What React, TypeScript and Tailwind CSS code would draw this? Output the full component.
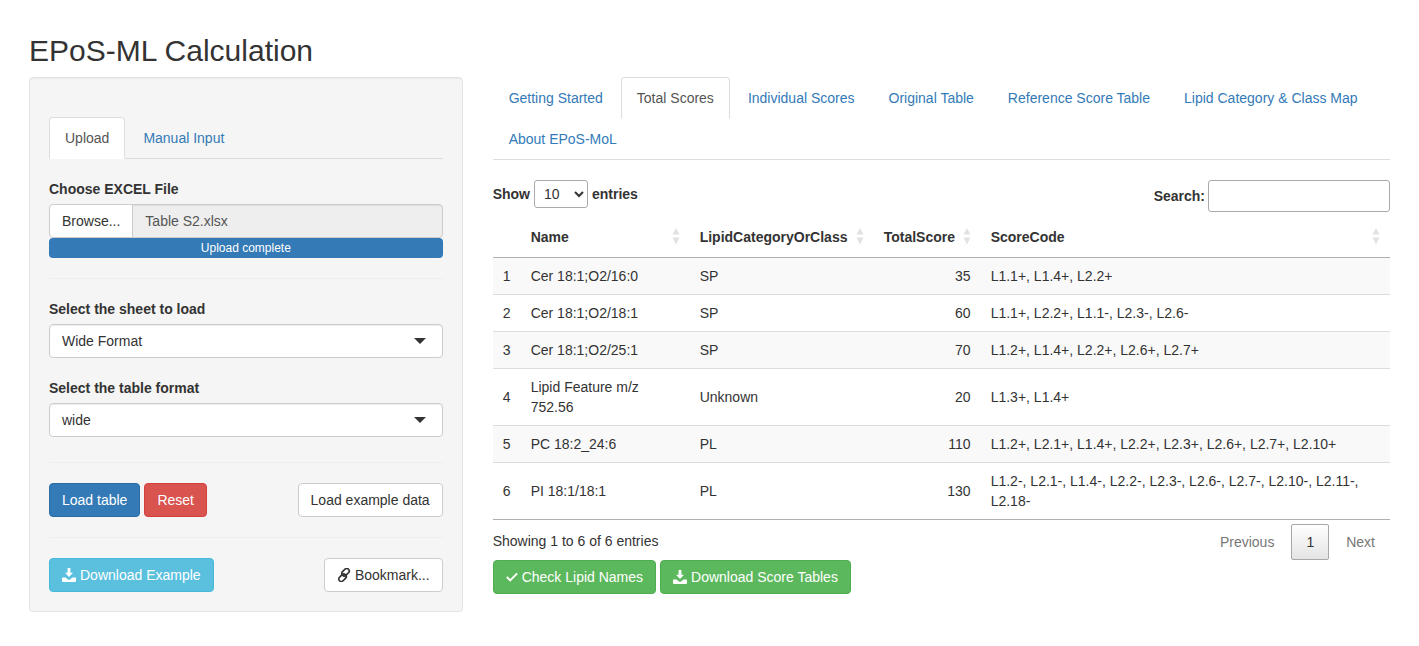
import React from 'react';

const rows = [
  { id: 1, name: 'Cer 18:1;O2/16:0', category: 'SP', score: 35, code: 'L1.1+, L1.4+, L2.2+' },
  { id: 2, name: 'Cer 18:1;O2/18:1', category: 'SP', score: 60, code: 'L1.1+, L2.2+, L1.1-, L2.3-, L2.6-' },
  { id: 3, name: 'Cer 18:1;O2/25:1', category: 'SP', score: 70, code: 'L1.2+, L1.4+, L2.2+, L2.6+, L2.7+' },
  { id: 4, name: 'Lipid Feature m/z 752.56', category: 'Unknown', score: 20, code: 'L1.3+, L1.4+' },
  { id: 5, name: 'PC 18:2_24:6', category: 'PL', score: 110, code: 'L1.2+, L2.1+, L1.4+, L2.2+, L2.3+, L2.6+, L2.7+, L2.10+' },
  { id: 6, name: 'PI 18:1/18:1', category: 'PL', score: 130, code: 'L1.2-, L2.1-, L1.4-, L2.2-, L2.3-, L2.6-, L2.7-, L2.10-, L2.11-, L2.18-' },
];

const SortIcon = () => (
  <svg width="8" height="17" viewBox="0 0 8 17" className="shrink-0">
    <path d="M4 0 L7.5 6.5 L0.5 6.5 Z" fill="#e2e2e2" />
    <path d="M4 16.5 L7.5 9.5 L0.5 9.5 Z" fill="#e2e2e2" />
  </svg>
);

const DownloadIcon = () => (
  <svg width="14" height="14" viewBox="0 0 14 14" className="shrink-0" fill="currentColor">
    <path d="M5.6 0 H8.4 V4.8 H11 L7 9 L3 4.8 H5.6 Z" />
    <path d="M0 9.5 H3.6 L6 11.5 Q7 12.2 8 11.5 L10.4 9.5 H14 V13 Q14 14 13 14 H1 Q0 14 0 13 Z" />
  </svg>
);

const LinkIcon = () => (
  <svg width="14" height="14" viewBox="0 0 14 14" className="shrink-0" fill="none" stroke="currentColor" strokeWidth="1.7">
    <rect x="6" y="0" width="5" height="8.4" rx="2.5" transform="rotate(45 8.5 4.2)" />
    <rect x="3" y="5.6" width="5" height="8.4" rx="2.5" transform="rotate(45 5.5 9.8)" />
  </svg>
);

const CheckIcon = () => (
  <svg width="12" height="10" viewBox="0 0 12 10" className="shrink-0" fill="none" stroke="currentColor" strokeWidth="1.9">
    <path d="M0.8 5 L4.2 8.4 L11.2 1.4" />
  </svg>
);

const Select = ({ value }: { value: string }) => (
  <div className="flex h-[34px] items-center justify-between rounded-[4px] border border-[#cccccc] bg-white pl-3 pr-4 shadow-[inset_0_1px_1px_rgba(0,0,0,0.075)]">
    <span>{value}</span>
    <svg width="12" height="6" viewBox="0 0 12 6">
      <path d="M0 0 L12 0 L6 6 Z" fill="#333333" />
    </svg>
  </div>
);

const btn = 'flex h-[34px] items-center rounded-[4px] border px-3';
const hr = 'border-0 border-t border-[#eeeeee]';

export default function App() {
  return (
    <div className="pb-[34px] pl-[29px] pr-[29px] pt-[34px] font-['Liberation_Sans',Arial,sans-serif] text-[14px] leading-[20px] text-[#333333]">
      <h2 className="mb-[10px] text-[30px] leading-[33px]">EPoS-ML Calculation</h2>

      <div className="flex gap-[30px]">
        {/* sidebar */}
        <div className="w-[433.67px] shrink-0 self-start rounded-[4px] border border-[#e3e3e3] bg-[#f5f5f5] px-[19px] pb-[19px] pt-[39px] shadow-[inset_0_1px_1px_rgba(0,0,0,0.05)]">
          <div className="flex border-b border-[#dddddd]">
            <div className="-mb-px mr-[2px] rounded-t-[4px] border border-[#dddddd] border-b-white bg-white px-[15px] py-[10px] text-[#555555]">Upload</div>
            <div className="-mb-px border border-transparent px-[15px] py-[10px] text-[#337ab7]">Manual Input</div>
          </div>

          <div className="mb-[5px] mt-[20px] font-bold">Choose EXCEL File</div>
          <div className="flex h-[34px]">
            <div className="flex items-center rounded-l-[4px] border border-[#cccccc] bg-white px-3">Browse...</div>
            <div className="-ml-px flex flex-1 items-center rounded-r-[4px] border border-[#cccccc] bg-[#eeeeee] px-3 text-[#555555] shadow-[inset_0_1px_1px_rgba(0,0,0,0.075)]">Table S2.xlsx</div>
          </div>
          <div className="h-[20px] rounded-[4px] bg-[#337ab7] text-center text-[12px] leading-[20px] text-white">Upload complete</div>

          <hr className={`${hr} mb-[20px] mt-[20px]`} />

          <div className="mb-[5px] font-bold">Select the sheet to load</div>
          <Select value="Wide Format" />
          <div className="mb-[5px] mt-[20px] font-bold">Select the table format</div>
          <Select value="wide" />

          <hr className={`${hr} mb-[20px] mt-[25px]`} />

          <div className="flex items-center">
            <div className={`${btn} border-[#2e6da4] bg-[#337ab7] text-white`}>Load table</div>
            <div className={`${btn} ml-[4px] border-[#d43f3a] bg-[#d9534f] text-white`}>Reset</div>
            <div className={`${btn} ml-auto border-[#cccccc] bg-white`}>Load example data</div>
          </div>

          <hr className={`${hr} mb-[20px] mt-[20px]`} />

          <div className="flex items-center justify-between">
            <div className={`${btn} gap-[4px] border-[#46b8da] bg-[#5bc0de] text-white`}>
              <DownloadIcon />
              Download Example
            </div>
            <div className={`${btn} gap-[4px] border-[#cccccc] bg-white`}>
              <LinkIcon />
              Bookmark...
            </div>
          </div>
        </div>

        {/* main panel */}
        <div className="min-w-0 flex-1">
          <div className="flex flex-wrap border-b border-[#dddddd]">
            {['Getting Started', 'Total Scores', 'Individual Scores', 'Original Table', 'Reference Score Table', 'Lipid Category & Class Map', 'About EPoS-MoL'].map(tab =>
              tab === 'Total Scores' ? (
                <div key={tab} className="-mb-px mr-[2px] rounded-t-[4px] border border-[#dddddd] border-b-white bg-white px-[15px] py-[10px] text-[#555555]">{tab}</div>
              ) : (
                <div key={tab} className="-mb-px mr-[2px] border border-transparent px-[15px] py-[10px] text-[#337ab7]">{tab}</div>
              )
            )}
          </div>

          <div className="mt-[20px] flex items-start justify-between">
            <div className="flex h-[28px] items-center font-bold">
              Show
              <select className="mx-[4px] h-[28px] w-[54px] rounded-[3px] border border-[#aaaaaa] bg-white px-[5px] font-normal">
                <option>10</option>
              </select>
              entries
            </div>
            <div className="flex items-center font-bold">
              Search:
              <input className="ml-[3px] h-[32px] w-[182px] rounded-[3px] border border-[#aaaaaa] bg-white" />
            </div>
          </div>

          <table className="mt-[5px] w-full table-fixed border-collapse">
            <thead>
              <tr className="border-b border-[#b0b0b0] text-left">
                <th className="h-[40px] w-[28px]"></th>
                <th className="w-[169px] pl-[10px] pr-[10px]">
                  <div className="flex items-center justify-between">Name <SortIcon /></div>
                </th>
                <th className="w-[184px] pl-[10px] pr-[10px]">
                  <div className="flex items-center justify-between">LipidCategoryOrClass <SortIcon /></div>
                </th>
                <th className="w-[107px] pl-[10px] pr-[10px]">
                  <div className="flex items-center justify-between">TotalScore <SortIcon /></div>
                </th>
                <th className="pl-[10px] pr-[10px]">
                  <div className="flex items-center justify-between">ScoreCode <SortIcon /></div>
                </th>
              </tr>
            </thead>
            <tbody>
              {rows.map((row, i) => (
                <tr key={row.id} className={`${i === rows.length - 1 ? 'border-[#b0b0b0]' : 'border-[#dddddd]'} border-b ${i % 2 === 0 ? 'bg-[#f9f9f9]' : 'bg-white'}`}>
                  <td className="px-[10px] py-[8px]">{row.id}</td>
                  <td className="px-[10px] py-[8px]">{row.name}</td>
                  <td className="px-[10px] py-[8px]">{row.category}</td>
                  <td className="px-[10px] py-[8px] text-right">{row.score}</td>
                  <td className="px-[10px] py-[8px]">{row.code}</td>
                </tr>
              ))}
            </tbody>
          </table>

          <div className="flex h-[40px] items-start justify-between">
            <div className="pt-[11px]">Showing 1 to 6 of 6 entries</div>
            <div className="flex pt-[4px] text-[#777777]">
              <div className="border border-transparent px-[14px] py-[7px]">Previous</div>
              <div className="ml-[2px] rounded-[2px] border border-[#a8a8a8] bg-gradient-to-b from-white to-[#e4e4e4] px-[14px] py-[7px] text-[#333333]">1</div>
              <div className="ml-[2px] border border-transparent px-[14px] py-[7px]">Next</div>
            </div>
          </div>

          <div className="flex gap-[4px]">
            <div className={`${btn} gap-[4px] border-[#4cae4c] bg-[#5cb85c] text-white`}>
              <CheckIcon />
              Check Lipid Names
            </div>
            <div className={`${btn} gap-[4px] border-[#4cae4c] bg-[#5cb85c] text-white`}>
              <DownloadIcon />
              Download Score Tables
            </div>
          </div>
        </div>
      </div>
    </div>
  );
}
